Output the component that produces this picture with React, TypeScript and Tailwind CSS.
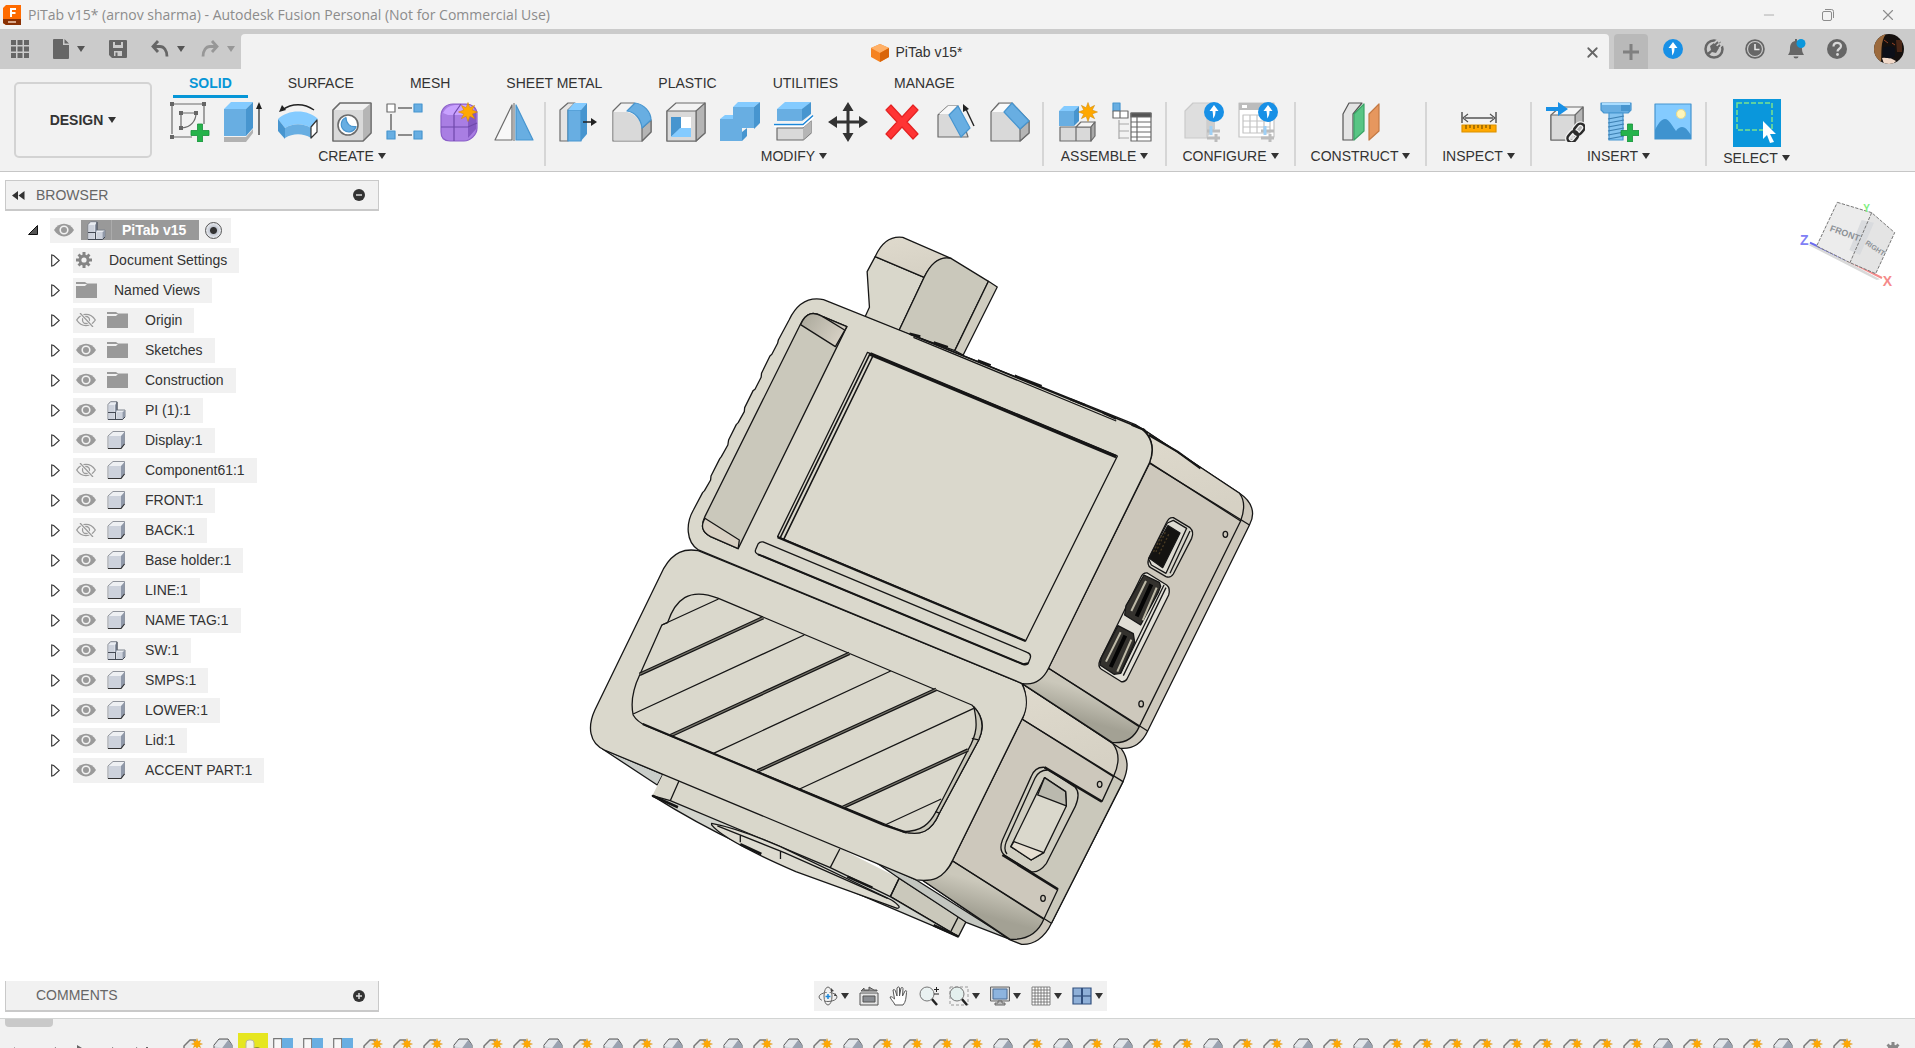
import type { ReactNode } from 'react';
import { Minus, X } from 'lucide-react';
import clsx from 'clsx';

type TreeIconName = 'gear' | 'folder' | 'body' | 'assembly';

interface TreeItem {
  label: string;
  icon: TreeIconName;
  visible?: boolean;
}

interface ToolGroup {
  label: string;
  width: string;
  tools: { name: string; icon: ReactNode }[];
}

/* ---------- small shared icons ---------- */

function Caret({ className = 'text-[#333]' }: { className?: string }) {
  return (
    <svg viewBox="0 0 8 6" className={clsx('w-2 h-[6px] shrink-0', className)} fill="currentColor">
      <path d="M0 0h8L4 6z" />
    </svg>
  );
}

function UpBadge({ className }: { className?: string }) {
  return (
    <svg viewBox="0 0 20 20" className={className}>
      <circle cx="10" cy="10" r="10" fill="#1890e6" />
      <path d="M10 3l4.500 6h-3c0 3-.3 5-2.500 7.500C9.300 14 9 12 8.500 9h-3z" fill="#fff" />
    </svg>
  );
}

function Star({ x, y, s = 1 }: { x: number; y: number; s?: number }) {
  return (
    <path
      transform={`translate(${x} ${y}) scale(${s})`}
      d="M0-10L2-4.500L7-7L4.500-2L10 0L4.500 2L7 7L2 4.500L0 10L-2 4.500L-7 7L-4.500 2L-10 0L-4.500-2L-7-7L-2-4.500z"
      fill="#ffa800"
      stroke="#c98300"
      strokeWidth="0.5"
    />
  );
}

function Tool({ children }: { children: ReactNode }) {
  return (
    <svg viewBox="0 0 40 40" className="size-10" fill="none" stroke="#6b6b6b" strokeWidth="1.2" strokeLinejoin="round">
      {children}
    </svg>
  );
}

const Plus = ({ x, y }: { x: number; y: number }) => (
  <path
    transform={`translate(${x} ${y})`}
    d="M-2.500-9h5v6.500H9v5H2.500V9h-5V2.500H-9v-5h6.500z"
    fill="#25b34b"
    stroke="#17903a"
    strokeWidth="0.8"
  />
);

const Sliders = () => (
  <g stroke="#bcbcbc" strokeWidth="3">
    <path d="M23 29h13M23 36h13" />
    <path d="M27 24v9" stroke="#9fd0f5" />
    <path d="M32 32v8" />
  </g>
);

const UpDot = () => (
  <g stroke="none">
    <circle cx="30" cy="10" r="10" fill="#1890e6" />
    <path d="M30 3l4.500 6h-3c0 3-.3 5-2.500 7.500c.3-2.500 0-4.500-.5-7.500h-3z" fill="#fff" />
  </g>
);

/* ---------- ribbon ---------- */

const groups: ToolGroup[] = [
  {
    label: 'CREATE',
    width: 'w-[394px] pl-2',
    tools: [
      {
        name: 'Create Sketch',
        icon: (
          <Tool>
            <path d="M4 2h28M2 4v28M34 4v18M4 35h18" />
            <path d="M11 11h15M11 11v15M26 11c0 8-5 14-14 15" />
            <path d="M0 0h4v4H0zM32 0h4v4h-4zM0 33h4v4H0zM9 9h4v4H9zM24 9h4v4h-4zM9 24h4v4H9z" fill="#666" stroke="none" />
            <Plus x={30} y={31} />
          </Tool>
        ),
      },
      {
        name: 'Extrude',
        icon: (
          <Tool>
            <path d="M0 35h22l7-8v4l-7 9H0z" fill="#b2b2b2" stroke="none" />
            <path d="M0 7h22v27H0z" fill="#68aee2" stroke="none" />
            <path d="M0 7l7-7h22l-7 7z" fill="#84cbff" stroke="none" />
            <path d="M22 7l7-7v26l-7 8z" fill="#4795cf" stroke="none" />
            <path d="M35 33V5" stroke="#222" />
            <path d="M32 7l3-7 3 7z" fill="#222" stroke="none" />
          </Tool>
        ),
      },
      {
        name: 'Revolve',
        icon: (
          <Tool>
            <path d="M0 17C10 7 30 7 40 17l-7 9c-8-5-18-5-26 0z" fill="#84cbff" stroke="none" />
            <path d="M7 26c8-5 18-5 26 0v10c-8-5-18-5-26 0z" fill="#68aee2" stroke="none" />
            <path d="M0 17l7 9v11l-7-8z" fill="#4795cf" stroke="none" />
            <path d="M39 18v12l-6 6V25z" fill="#fff" stroke="#333" />
            <path d="M4 8C14 1 26 1 36 8" stroke="#222" strokeWidth="1.400" />
            <path d="M1 10l3-7 4 5z" fill="#222" stroke="none" />
          </Tool>
        ),
      },
      {
        name: 'Hole',
        icon: (
          <Tool>
            <path d="M1 8l7-7h31v30l-8 8H1z" fill="#f1f1f1" />
            <path d="M31 8l8-7v30l-8 8z" fill="#b5b5b5" stroke="none" />
            <path d="M1.500 8H31v30.500H1.500z" fill="#d9d9d9" stroke="none" />
            <path d="M1 8l7-7h31v30l-8 8H1z" />
            <circle cx="16" cy="23" r="10" fill="#fff" strokeWidth="1.600" />
            <path d="M14 15.500a7.500 7.500 0 1 0 10 9c-6 1-10-3-10-9z" fill="#68aee2" stroke="#4795cf" />
          </Tool>
        ),
      },
      {
        name: 'Rectangular Pattern',
        icon: (
          <Tool>
            <path d="M12 6h14M5 12v16M12 33h14" strokeWidth="1.500" />
            <path d="M1 2h8v8H1z" fill="#fff" />
            <path d="M28 2h8v8h-8zM1 29h8v8H1zM28 29h8v8h-8z" fill="#68aee2" stroke="#4795cf" />
          </Tool>
        ),
      },
      {
        name: 'Create Form',
        icon: (
          <Tool>
            <path d="M1 14C1 7 6 2 13 2h13c6 0 11 4 11 10v14c0 7-7 13-13 13H10c-6 0-9-3-9-9z" fill="#a97ee3" stroke="#8a5fc8" />
            <path d="M3 11c3-6 8-8 14-8h9c5 0 8 2 8 4l-8 6H8z" fill="#c8a1ff" stroke="none" />
            <path d="M28 14l8-4v17l-8 9z" fill="#8459c2" stroke="none" />
            <path d="M14 12v27M1 25h27l9-4M14 12l7-10" stroke="#6f48ab" />
            <Star x={28} y={10} s={0.95} />
          </Tool>
        ),
      },
      {
        name: 'Mirror',
        icon: (
          <Tool>
            <path d="M18 3v35H1z" fill="#f8f8f8" />
            <path d="M20 1v38" strokeWidth="1" />
            <path d="M22 3v35h17z" fill="#68aee2" stroke="#4795cf" />
          </Tool>
        ),
      },
    ],
  },
  {
    label: 'MODIFY',
    width: 'w-[498px]',
    tools: [
      {
        name: 'Press Pull',
        icon: (
          <Tool>
            <path d="M10 1h7l-7 7v31H2V8z" fill="#e4e4e4" />
            <path d="M10 8h13v31H10z" fill="#68aee2" stroke="#4795cf" />
            <path d="M10 8l6-7h13l-6 7z" fill="#84cbff" stroke="none" />
            <path d="M23 8l6-7v31l-6 7z" fill="#4795cf" stroke="none" />
            <path d="M25 20h10" stroke="#222" strokeWidth="1.500" />
            <path d="M33 16l6 4-6 4z" fill="#222" stroke="none" />
          </Tool>
        ),
      },
      {
        name: 'Fillet',
        icon: (
          <Tool>
            <path d="M1 9l8-8h13l17 18v11l-9 9H1z" fill="#f3f3f3" />
            <path d="M1.500 10H15c9 2 15 10 15 18v10.500H1.500z" fill="#d9d9d9" stroke="none" />
            <path d="M30 26l9-8v12l-9 9z" fill="#b5b5b5" />
            <path d="M15 9l8-8c9 1 16 9 16 17l-9 8c-1-9-7-16-15-17z" fill="#68aee2" stroke="#4795cf" />
          </Tool>
        ),
      },
      {
        name: 'Shell',
        icon: (
          <Tool>
            <path d="M1 9l9-8h29v30l-9 8H1z" fill="#f3f3f3" />
            <path d="M30 9l9-8v30l-9 8z" fill="#b5b5b5" />
            <path d="M1 9h29v30H1z" fill="#d9d9d9" />
            <path d="M5 15h20v20H5z" fill="#fff" stroke="none" />
            <path d="M5 15h10v11L5 35z" fill="#4795cf" stroke="none" />
            <path d="M5 35l9-9h11v9z" fill="#84cbff" stroke="none" />
          </Tool>
        ),
      },
      {
        name: 'Combine',
        icon: (
          <Tool>
            <path d="M0 17h13V5h21v21H22v13H0z" fill="#68aee2" stroke="none" />
            <path d="M0 17l5-4h8v4zM13 5l5-5h22l-6 5z" fill="#84cbff" stroke="none" />
            <path d="M34 5l6-5v21l-6 6zM22 39v-9l5-4v8z" fill="#4795cf" stroke="none" />
          </Tool>
        ),
      },
      {
        name: 'Split Body',
        icon: (
          <Tool>
            <path d="M3 7h25v12H3z" fill="#68aee2" stroke="none" />
            <path d="M3 7l8-7h26l-8 7z" fill="#84cbff" stroke="none" />
            <path d="M28 7l9-7v12l-9 7z" fill="#4795cf" stroke="none" />
            <path d="M3 26h26l8-7v12l-8 7H3z" fill="#d9d9d9" />
            <path d="M29 26l8-7v12l-8 7z" fill="#b5b5b5" stroke="none" />
            <path d="M0 23h29l10-9" stroke="#fff" strokeWidth="4" />
            <path d="M0 22.500h29l10-9" stroke="#1b86d8" strokeWidth="1.500" />
          </Tool>
        ),
      },
      {
        name: 'Move/Copy',
        icon: (
          <svg viewBox="0 0 40 40" className="size-10" fill="#333">
            <path d="M20 0l5.500 9h-4v9.500H31V14l9 6-9 6v-4.500h-9.500V31h4L20 40l-5.500-9h4v-9.500H9V26l-9-6 9-6v4.500h9.500V9h-4z" />
          </svg>
        ),
      },
      {
        name: 'Delete',
        icon: (
          <Tool>
            <path d="M4 8l5-5 11 12L31 3l5 5-11 12 11 12-5 5-11-12L9 37l-5-5 11-12z" fill="#ff3434" stroke="#e32222" />
          </Tool>
        ),
      },
      {
        name: 'Draft',
        icon: (
          <Tool>
            <path d="M2 13l10-9h10l10 31H2z" fill="#d9d9d9" />
            <path d="M3 12l9-8h9l-8 8z" fill="#f8f8f8" stroke="none" />
            <path d="M13 13l9-9 12 22-9 9z" fill="#68aee2" stroke="#4795cf" />
            <path d="M38 24L29 5" stroke="#222" strokeWidth="1.400" />
            <path d="M27 10l0-8 6 5z" fill="#222" stroke="none" />
          </Tool>
        ),
      },
      {
        name: 'Chamfer',
        icon: (
          <Tool>
            <path d="M1 10l8-9h13l17 18v12l-9 8H1z" fill="#d9d9d9" />
            <path d="M2 10l8-8h12l-8 8z" fill="#fafafa" stroke="none" />
            <path d="M30 27l9-8v12l-9 8z" fill="#b5b5b5" />
            <path d="M14 10l8-9 17 18-9 8z" fill="#68aee2" stroke="#4795cf" />
          </Tool>
        ),
      },
    ],
  },
  {
    label: 'ASSEMBLE',
    width: 'w-[123px]',
    tools: [
      {
        name: 'New Component',
        icon: (
          <Tool>
            <path d="M2 25h16v14H2zM18 25h15v14H18z" fill="#d9d9d9" />
            <path d="M18 25l5-5h14l-4 5z" fill="#f5f5f5" />
            <path d="M33 25l4-5v14l-4 5z" fill="#a9a9a9" />
            <path d="M1 9h15v15H1z" fill="#68aee2" stroke="none" />
            <path d="M1 9l5-5h15l-5 5z" fill="#84cbff" stroke="none" />
            <path d="M16 9l5-5v15l-5 5z" fill="#4795cf" stroke="none" />
            <Star x={30} y={10} s={0.95} />
          </Tool>
        ),
      },
      {
        name: 'Component Table',
        icon: (
          <Tool>
            <path d="M1 1h7v8H1z" fill="#68aee2" stroke="#4795cf" />
            <path d="M1 9h7v7H1zM8 9h8v7H8z" fill="#fff" />
            <path d="M7 18v19M7 22h10M7 29h10M7 36h10" stroke="#a8a8a8" />
            <path d="M19 11h20v28H19z" fill="#fff" />
            <path d="M19 11h20v4H19z" fill="#555" />
            <path d="M25 15v24M19 20h20M19 25h20M19 30h20M19 35h20" />
          </Tool>
        ),
      },
    ],
  },
  {
    label: 'CONFIGURE',
    width: 'w-[129px]',
    tools: [
      {
        name: 'Configure Design',
        icon: (
          <Tool>
            <path d="M1 9l8-8h20l-6 8v27H1z" fill="#dedede" stroke="#cacaca" />
            <path d="M23 9l8-8v26l-8 8z" fill="#cdcdcd" stroke="none" />
            <UpDot />
            <Sliders />
          </Tool>
        ),
      },
      {
        name: 'Configuration Table',
        icon: (
          <Tool>
            <path d="M1 1h35v34H1z" fill="#fff" stroke="#c4c4c4" />
            <path d="M1 1h35v7H1z" fill="#bcbcbc" stroke="none" />
            <path d="M4 3h5v3H4z" fill="#fff" stroke="none" />
            <path d="M5 13h27v18H5zM5 19h27M5 25h27M12 13v18M19 13v18M26 13v18" stroke="#c4c4c4" />
            <UpDot />
            <Sliders />
          </Tool>
        ),
      },
    ],
  },
  {
    label: 'CONSTRUCT',
    width: 'w-[131px]',
    tools: [
      {
        name: 'Offset Plane',
        icon: (
          <Tool>
            <path d="M2 12L8 1h13l-9 11v26H2z" fill="#e4e4e4" stroke="#555" />
            <path d="M13 12L23 2v27L13 38z" fill="#58c584" stroke="#3aa566" />
            <path d="M28 12L38 2v27L28 38z" fill="#e6975e" stroke="#c47a45" />
          </Tool>
        ),
      },
    ],
  },
  {
    label: 'INSPECT',
    width: 'w-[105px]',
    tools: [
      {
        name: 'Measure',
        icon: (
          <Tool>
            <path d="M3 10v11M37 10v11M6 16h28" stroke="#555" strokeWidth="1.500" />
            <path d="M9 12l-5 4 5 4M31 12l5 4-5 4" stroke="#555" />
            <path d="M3 23h34v7H3z" fill="#ffa800" stroke="#dc9200" />
            <path d="M7 23v4M11 23v3M15 23v4M19 23v3M23 23v4M27 23v3M31 23v4" stroke="#7a5200" />
          </Tool>
        ),
      },
    ],
  },
  {
    label: 'INSERT',
    width: 'w-[175px]',
    tools: [
      {
        name: 'Insert Derive',
        icon: (
          <Tool>
            <path d="M6 13l9-8h23v26l-8 7H6z" fill="#f5f5f5" />
            <path d="M30 13l8-8v26l-8 7z" fill="#b5b5b5" />
            <path d="M6 13h24v25H6z" fill="#d9d9d9" />
            <path d="M1 5h12V0l10 7-10 7V9H1z" fill="#1890e6" stroke="none" />
            <g transform="rotate(-50 31 31)" stroke="#f1f1f1" strokeWidth="5">
              <rect x="20" y="27" width="12" height="8" rx="4" />
              <rect x="30" y="27" width="12" height="8" rx="4" />
            </g>
            <g transform="rotate(-50 31 31)" stroke="#2b2b2b" strokeWidth="2.500">
              <rect x="20" y="27" width="12" height="8" rx="4" />
              <rect x="30" y="27" width="12" height="8" rx="4" />
            </g>
          </Tool>
        ),
      },
      {
        name: 'Insert Fastener',
        icon: (
          <Tool>
            <path d="M2 1h30v7l-3 3H5L2 8z" fill="#68aee2" stroke="#4795cf" />
            <path d="M3 1h28v2H3z" fill="#a8dcff" stroke="none" />
            <path d="M22 3h9v6h-9z" fill="#4795cf" stroke="none" />
            <path d="M10 11h14v27H10z" fill="#84c3f0" stroke="#4795cf" />
            <path d="M9 17l16-3M9 21l16-3M9 25l16-3M9 29l16-3M9 33l16-3M9 37l16-3" stroke="#3c7fb2" />
            <Plus x={31} y={31} />
          </Tool>
        ),
      },
      {
        name: 'Canvas',
        icon: (
          <Tool>
            <path d="M2 2h36v35H2z" fill="#84cbff" stroke="#4795cf" />
            <path d="M2 28c3-6 6-11 10-11s8 8 11 12c2-3 4-4 6-4 4 0 6 4 9 8v4H2z" fill="#3f93cf" stroke="none" />
            <circle cx="28" cy="12" r="4.500" fill="#fff6ba" stroke="#e6d98d" />
          </Tool>
        ),
      },
    ],
  },
  {
    label: 'SELECT',
    width: 'w-[99px]',
    tools: [
      {
        name: 'Select',
        icon: (
          <svg viewBox="0 0 48 48" className="size-12 bg-[#0a97dc]" fill="none">
            <path d="M4 4h35v27H4z" stroke="#7be38d" strokeWidth="1.500" strokeDasharray="5 2" />
            <path d="M30 22l13 13h-6l4 8-4 1-3-8-4 4z" fill="#fff" />
          </svg>
        ),
      },
    ],
  },
];

const workspaceTabs = [
  { label: 'SOLID', active: true },
  { label: 'SURFACE' },
  { label: 'MESH' },
  { label: 'SHEET METAL' },
  { label: 'PLASTIC' },
  { label: 'UTILITIES' },
  { label: 'MANAGE' },
];

function TitleBar() {
  return (
    <header className="flex h-[29px] shrink-0 items-center bg-[#f3f3f3] pl-[3px] text-[#8c8c8c]">
      <svg viewBox="0 0 18 20" className="h-5 w-[18px]">
        <path d="M3 0h15v20H3L0 18V3z" fill="#ff6b00" />
        <path d="M0 14h18v6H3l-3-2z" fill="#8a3205" />
        <path d="M7 3h6v2H9v2h3.500v2H9v3H7z" fill="#fff" />
        <path d="M5 16h8v2H5z" fill="#d9a88a" />
      </svg>
      <h1 className="ml-[7px] font-['Open_Sans','Noto_Sans',sans-serif] text-[14px] whitespace-nowrap">
        PiTab v15* (arnov sharma) - Autodesk Fusion Personal (Not for Commercial Use)
      </h1>
      <div className="ml-auto flex items-center gap-[44px] pr-[18px]">
        <button aria-label="Minimize">
          <Minus className="size-4" strokeWidth={1} />
        </button>
        <button aria-label="Restore">
          <svg viewBox="0 0 14 14" className="size-[14px]" fill="none" stroke="currentColor">
            <rect x="1.500" y="3.500" width="9" height="9" rx="1.500" />
            <path d="M4 1.500h6.500a2 2 0 0 1 2 2V10" />
          </svg>
        </button>
        <button aria-label="Close">
          <X className="size-[18px]" strokeWidth={1.5} />
        </button>
      </div>
    </header>
  );
}

function DocumentBar() {
  return (
    <div className="flex h-10 shrink-0 bg-[#cbcbcb] pt-[5px] text-[#666]">
      <div className="flex w-[241px] shrink-0 items-center pb-[5px] pl-[11px]">
        <button aria-label="Data panel" className="mr-6">
          <svg viewBox="0 0 18 18" className="size-[18px]" fill="currentColor">
            <path d="M0 0h5v5H0zM6.500 0h5v5h-5zM13 0h5v5h-5zM0 6.500h5v5H0zM6.500 6.500h5v5h-5zM13 6.500h5v5h-5zM0 13h5v5H0zM6.500 13h5v5h-5zM13 13h5v5h-5z" />
          </svg>
        </button>
        <button aria-label="File" className="mr-6 flex items-center gap-2">
          <svg viewBox="0 0 16 20" className="h-5 w-4" fill="currentColor">
            <path d="M1 0h9v6h6v13a1 1 0 0 1-1 1H1a1 1 0 0 1-1-1V1a1 1 0 0 1 1-1zM11.500 0L16 4.500h-4.500z" />
          </svg>
          <Caret className="text-[#555]" />
        </button>
        <button aria-label="Save" className="mr-6">
          <svg viewBox="0 0 18 18" className="size-[18px]" fill="currentColor" fillRule="evenodd">
            <path d="M1 0h16a1 1 0 0 1 1 1v16a1 1 0 0 1-1 1H3l-3-3V1a1 1 0 0 1 1-1zM4 2v6h10V2h-2v3H6V2zM5 11v5h8v-5zM6.500 12.500h2V16h-2z" />
          </svg>
        </button>
        <button aria-label="Undo" className="mr-4 flex items-center gap-2">
          <svg viewBox="0 0 18 18" className="size-[18px]" fill="none" stroke="currentColor" strokeWidth="2.800">
            <path d="M7 1L2 6.500L7 12M2 6.500h7c4 0 7 4 7 10" />
          </svg>
          <Caret className="text-[#555]" />
        </button>
        <button aria-label="Redo" className="flex items-center gap-2 text-[#979797]">
          <svg viewBox="0 0 18 18" className="size-[18px]" fill="none" stroke="currentColor" strokeWidth="2.800">
            <path d="M11 1l5 5.500L11 12M16 6.500H9c-4 0-7 4-7 10" />
          </svg>
          <Caret className="text-[#979797]" />
        </button>
      </div>

      <div className="flex flex-1 items-center rounded-t-[4px] bg-[#f2f2f2] pt-[2px] pr-2">
        <div className="flex flex-1 items-center justify-center gap-[7px] pl-2 text-[14px] text-[#333]">
          <svg viewBox="0 0 18 18" className="size-[18px]">
            <path d="M9 0l9 4v9l-9 5-9-5V4z" fill="#f58220" />
            <path d="M9 0l9 4-9 5-9-5z" fill="#ffb066" />
            <path d="M9 9l9-5v9l-9 5z" fill="#d9650a" />
          </svg>
          <span>PiTab v15*</span>
        </div>
        <button aria-label="Close document">
          <X className="size-[17px]" strokeWidth={2.5} />
        </button>
      </div>

      <button aria-label="New design" className="ml-[5px] flex w-[34px] items-center justify-center rounded-t-[4px] bg-[#b9b9b9]">
        <svg viewBox="0 0 16 16" className="size-4" fill="#808080">
          <path d="M6.500 0h3v6.500H16v3H9.500V16h-3V9.500H0v-3h6.500z" />
        </svg>
      </button>

      <div className="flex items-center gap-[21px] pr-[11px] pb-[5px] pl-[15px]">
        <button aria-label="Upgrade">
          <UpBadge className="size-5" />
        </button>
        <button aria-label="Extensions">
          <svg viewBox="0 0 20 20" className="size-5" fill="none">
            <circle cx="10" cy="10" r="8.500" stroke="currentColor" strokeWidth="2.500" />
            <path d="M3 14l4-3-1-4 4-3 5 5-3 5-4-1-3 3z" fill="currentColor" />
            <path d="M11 5l4-4M14 8l5-4" stroke="#cbcbcb" strokeWidth="4" />
            <path d="M11 6l3-3M13 9l3-3" stroke="currentColor" strokeWidth="1.800" />
          </svg>
        </button>
        <button aria-label="Job status">
          <svg viewBox="0 0 20 20" className="size-5">
            <circle cx="10" cy="10" r="9.800" fill="currentColor" />
            <circle cx="10" cy="10" r="7.500" fill="none" stroke="#cbcbcb" strokeWidth="1.200" />
            <path d="M10 5v5.500h4.500" fill="none" stroke="#e6e6e6" strokeWidth="1.600" />
          </svg>
        </button>
        <button aria-label="Notifications">
          <svg viewBox="0 0 20 20" className="size-5">
            <path d="M9 0h2v2c4 1 5 4 5 8 0 3 1 4 2 6H2c1-2 2-3 2-6 0-4 1-7 5-8zM7.500 17.500h5a2.500 2 0 0 1-5 0z" fill="currentColor" />
            <circle cx="15" cy="4.500" r="4.500" fill="#0a97dc" />
          </svg>
        </button>
        <button aria-label="Help">
          <svg viewBox="0 0 20 20" className="size-5">
            <circle cx="10" cy="10" r="10" fill="currentColor" />
            <path d="M6.500 7.500c0-5 7.500-4.500 7.500-.5 0 3-3.500 2.500-3.500 5.500" fill="none" stroke="#d8d8d8" strokeWidth="2.200" />
            <circle cx="10.500" cy="15.500" r="1.400" fill="#d8d8d8" />
          </svg>
        </button>
        <button aria-label="Account" className="ml-[6px]">
          <svg viewBox="0 0 30 30" className="size-[30px] rounded-full">
            <path d="M0 0h30v30H0z" fill="#15100e" />
            <path d="M0 0h12C6 8 8 18 7 30H0z" fill="#9c6a3d" />
            <path d="M22 6h6v12h-5z" fill="#4a2717" />
            <path d="M8 24c5-1 10 0 14 3l-3 3h-9z" fill="#f1d9c9" />
            <path d="M9 14c3-2 9-2 12 0v8c-3 3-9 3-12 0z" fill="#0c0f18" />
            <path d="M10 6l4 3M18 9l3 2" stroke="#9a4325" />
          </svg>
        </button>
      </div>
    </div>
  );
}

function Ribbon() {
  return (
    <div className="flex h-[103px] shrink-0 border-b border-[#c6c6c6] bg-[#f2f2f2] text-[#333]">
      <button className="mt-[13px] ml-[14px] flex h-[76px] w-[138px] shrink-0 items-center justify-center gap-[5px] rounded-[5px] border-2 border-[#d3d3d3] text-[14px] font-bold">
        DESIGN
        <Caret />
      </button>
      <div className="min-w-0 flex-1">
        <nav className="flex h-[29px] gap-6 pl-[21px]">
          {workspaceTabs.map((tab) => (
            <button
              key={tab.label}
              className={clsx(
                'border-b-3 px-4 pt-[2px] text-[14px] whitespace-nowrap',
                tab.active ? 'border-[#0696d7] font-bold text-[#0696d7]' : 'border-transparent',
              )}
            >
              {tab.label}
            </button>
          ))}
        </nav>
        <div className="flex">
          {groups.map((group) => (
            <section
              key={group.label}
              className={clsx(
                'my-1 flex h-[64px] shrink-0 flex-col items-center border-r-2 border-[#d6d6d6] last:border-r-0',
                group.width,
              )}
            >
              <div className="-mt-[3px] flex h-12 items-center">
                {group.tools.map((tool) => (
                  <button key={tool.name} title={tool.name} className="flex w-[54px] justify-center">
                    {tool.icon}
                  </button>
                ))}
              </div>
              <button className="mt-px flex items-center gap-1 text-[14px] leading-[20px] whitespace-nowrap">
                {group.label}
                <Caret />
              </button>
            </section>
          ))}
        </div>
      </div>
    </div>
  );
}

/* ---------- browser tree ---------- */

const treeItems: TreeItem[] = [
  { label: 'Document Settings', icon: 'gear' },
  { label: 'Named Views', icon: 'folder' },
  { label: 'Origin', icon: 'folder', visible: false },
  { label: 'Sketches', icon: 'folder', visible: true },
  { label: 'Construction', icon: 'folder', visible: true },
  { label: 'PI (1):1', icon: 'assembly', visible: true },
  { label: 'Display:1', icon: 'body', visible: true },
  { label: 'Component61:1', icon: 'body', visible: false },
  { label: 'FRONT:1', icon: 'body', visible: true },
  { label: 'BACK:1', icon: 'body', visible: false },
  { label: 'Base holder:1', icon: 'body', visible: true },
  { label: 'LINE:1', icon: 'body', visible: true },
  { label: 'NAME TAG:1', icon: 'body', visible: true },
  { label: 'SW:1', icon: 'assembly', visible: true },
  { label: 'SMPS:1', icon: 'body', visible: true },
  { label: 'LOWER:1', icon: 'body', visible: true },
  { label: 'Lid:1', icon: 'body', visible: true },
  { label: 'ACCENT PART:1', icon: 'body', visible: true },
];

function Eye({ visible }: { visible: boolean }) {
  return (
    <svg viewBox="0 0 20 14" className="h-[14px] w-5" fill="none">
      {visible ? (
        <>
          <path d="M0 7C5-1.500 15-1.500 20 7C15 15.500 5 15.500 0 7z" fill="#9a9a9a" />
          <circle cx="10" cy="7" r="3.800" stroke="#f2f2f2" strokeWidth="1.600" />
        </>
      ) : (
        <g stroke="#9a9a9a" strokeWidth="1.300">
          <path d="M.7 7C5.500-.5 14.500-.5 19.300 7C14.500 14.500 5.500 14.500 .7 7z" />
          <circle cx="10" cy="7" r="3.500" />
          <path d="M4 0l13 14" stroke="#f2f2f2" strokeWidth="3" />
          <path d="M4 0l13 14" />
        </g>
      )}
    </svg>
  );
}

function TreeIcon({ icon }: { icon: TreeIconName }) {
  if (icon === 'gear') {
    return (
      <svg viewBox="0 0 16 16" className="size-4">
        <path d="M6.500 0h3v16h-3zM0 6.500h16v3H0zM1.500 3.500l2-2 11 11-2 2zM12.500 1.500l2 2-11 11-2-2z" fill="#858585" />
        <circle cx="8" cy="8" r="5.500" fill="#858585" />
        <circle cx="8" cy="8" r="2.600" fill="#f2f2f2" />
      </svg>
    );
  }
  if (icon === 'folder') {
    return (
      <svg viewBox="0 0 21 16" className="h-4 w-[21px]" fill="#999">
        <path d="M0 0h9l2 1.500H21V16H0V4h9l2-2H0z" />
      </svg>
    );
  }
  if (icon === 'assembly') {
    return (
      <svg viewBox="0 0 19 19" className="size-[19px]" strokeLinejoin="round">
        <path d="M1 3.500L3.500 .7H10V9h8v7l-2.500 2.500H1z" fill="#e9ecf1" stroke="#7d828c" />
        <path d="M1.500 4H7.500v14h-6zM9.500 11h6v7h-6z" fill="#cdd2dc" />
        <path d="M8 4l2-3v9l-2 2zM15.500 11L18 9.500V16l-2.500 2z" fill="#8f98a8" />
        <path d="M1 11.500h7M8.500 11v7.500M1 18.500h14.500L18 16M10 1v8" fill="none" stroke="#444a54" />
      </svg>
    );
  }
  return (
    <svg viewBox="0 0 18 18" className="size-[18px]" strokeLinejoin="round">
      <path d="M1 5l5-4.500h11.500V13L14 17.500H1z" fill="#eef0f3" stroke="#8f939b" />
      <path d="M14 5l3.500-4v12L14 17z" fill="#8f98a8" />
      <path d="M2 5h12v12H2z" fill="#cdd2dc" />
      <path d="M1 17.500h13l3.500-4.500" fill="none" stroke="#333" strokeWidth="1.200" />
    </svg>
  );
}

function BrowserPanel() {
  return (
    <aside className="w-[379px] pl-[5px]">
      <div className="mt-2 flex h-[31px] items-center border border-b-2 border-[#c9c9c9] bg-[#f1f1f1] pr-[13px] pl-[6px] text-[14px] text-[#666]">
        <button aria-label="Collapse browser">
          <svg viewBox="0 0 13 9" className="h-[9px] w-[13px]" fill="#333">
            <path d="M6 0v9L0 4.500zM12.500 0v9L6.500 4.500z" />
          </svg>
        </button>
        <h2 className="ml-[11px]">BROWSER</h2>
        <button aria-label="Minimize browser" className="ml-auto">
          <svg viewBox="0 0 12 12" className="size-3">
            <circle cx="6" cy="6" r="6" fill="#333" />
            <path d="M3 6h6" stroke="#ddd" strokeWidth="1.500" />
          </svg>
        </button>
      </div>

      <div className="mt-1 flex h-[30px] items-center pl-[23px]">
        <svg viewBox="0 0 10 10" className="size-[10px]">
          <path d="M9.500 .5v9h-9z" fill="#555" stroke="#111" />
        </svg>
        <div className="ml-3 flex h-[25px] items-center bg-[#f1f1f1] pr-[9px] pl-1">
          <Eye visible />
          <div className="ml-[7px] flex h-5 items-center bg-[#999] text-[14px] font-bold text-white">
            <span className="flex h-full w-[31px] items-center justify-center border-r border-[#ababab]">
              <TreeIcon icon="assembly" />
            </span>
            <span className="pr-[13px] pl-[10px]">PiTab v15</span>
          </div>
          <input
            type="radio"
            aria-label="Activate PiTab v15"
            defaultChecked
            className="ml-[6px] size-[17px] appearance-none rounded-full border border-[#555] bg-[radial-gradient(circle,#333_0,#333_3px,#c3c8d2_4px,#eef0f4_8px)]"
          />
        </div>
      </div>

      <ul>
        {treeItems.map((item) => (
          <li key={item.label} className="flex h-[30px] items-center pl-[46px]">
            <button aria-label={`Expand ${item.label}`}>
              <svg viewBox="0 0 9 13" className="h-[13px] w-[9px]">
                <path d="M.7 1v11l2-.5L8.300 6.500L2.700 1.500z" fill="#fff" stroke="#333" strokeWidth="1.100" />
              </svg>
            </button>
            <div className="ml-[13px] flex h-[25px] items-center bg-[#f1f1f1] pr-3 pl-[3px] text-[14px] whitespace-nowrap text-[#333]">
              {item.visible !== undefined && (
                <span className="mr-[11px]">
                  <Eye visible={item.visible} />
                </span>
              )}
              <span className={item.icon === 'gear' ? 'w-[33px]' : 'w-[38px]'}>
                <TreeIcon icon={item.icon} />
              </span>
              <span>{item.label}</span>
            </div>
          </li>
        ))}
      </ul>
    </aside>
  );
}

/* ---------- 3D viewport ---------- */

function Model() {
  return (
    <svg
      viewBox="0 172 1915 846"
      className="absolute inset-0 h-full w-full [&_*]:[vector-effect:non-scaling-stroke]"
      stroke="#161616"
      strokeWidth="1.300"
      strokeLinejoin="round"
      fill="none"
    >
      <defs>
        <linearGradient id="roundTop" x1="0" y1="0" x2="0.300" y2="1">
          <stop offset="0" stopColor="#dfdacd" />
          <stop offset="1" stopColor="#d6d1c4" />
        </linearGradient>
        <linearGradient id="roundBottom" x1="0.550" y1="0.300" x2="0.400" y2="0.650">
          <stop offset="0" stopColor="#cbc8bb" />
          <stop offset="1" stopColor="#a3a194" />
        </linearGradient>
        <linearGradient id="recess" x1="0" y1="0" x2="1" y2="0.500">
          <stop offset="0" stopColor="#a9a79a" />
          <stop offset="1" stopColor="#d6d0c4" />
        </linearGradient>
      </defs>

      {/* base holder and lower housing */}
      <g transform="translate(570 530) scale(0.3827 0.3333)">
        <path d="M85 657L228 765L243 733z" fill="#c9cdc9" />
        <path d="M215 797L243 733L705 955L860 1045L1035 1175L1015 1220L837 1100L680 1013L262 812z" fill="#d9d7cb" stroke="none" />
        <path d="M860 1045L1035 1175L1015 1220L837 1100z" fill="#cac8bb" />
        <path d="M215 797Q330 880 450 945L590 1012L1015 1220L837 1100L680 1013L262 812z" fill="#d2d4cd" />
        <path d="M370 880Q440 895 550 950L840 1110Q870 1133 855 1135L590 1025Q400 930 370 885z" fill="#dddbd0" />
        <path d="M385 888L560 968L830 1105M445 915v22M550 965v22M285 752L262 812M705 957L680 1013M860 1045L837 1100M1015 1160L995 1205" />
        <path d="M215 797L282 832M445 943L500 972M725 1040L790 1073M950 1186L1015 1220" strokeWidth="2.600" />
        <path d="M790 990L905 1050L1150 1228L1035 1177L860 1045z" fill="#c3c6c0" />

        <path d="M1190 470L1418 640L1440 655C1462 690 1458 720 1445 755L1258 1180C1240 1225 1210 1245 1180 1243L1150 1230L920 1050L1000 990L1180 570z" fill="#cdc8bc" />
        <path d="M1330 775L1390 815L1420 740L1445 755L1258 1180L1238 1168L1275 1078L1130 975z" fill="#cac8bb" stroke="none" />
        <path d="M1182 462L1418 640Q1445 680 1420 740L1182 568Q1200 510 1182 462z" fill="url(#roundTop)" />
        <path d="M1000 993L1238 1168Q1215 1232 1150 1228L920 1050Q975 1050 1000 993z" fill="url(#roundBottom)" />
        <path d="M1182 568L1445 755L1258 1180M1420 740L1390 815M1000 993L1258 1180M1275 1078L1238 1168" />
        <path d="M1240 712Q1215 710 1205 740L1130 930Q1120 960 1135 975L1205 1025Q1225 1030 1245 1000L1320 830Q1335 790 1320 772z" fill="#d0cec1" />
        <path d="M1248 720Q1225 720 1215 745L1140 935Q1132 960 1142 972" />
        <path d="M1240 743L1295 785L1297 828L1238 968L1205 990L1152 950z" fill="#dad8cc" />
        <path d="M1240 743L1295 785L1297 828L1222 795z" fill="#bab9ae" />
        <path d="M1160 935L1238 968L1205 990L1152 950z" fill="#e6dfd2" />
        <path d="M1240 712L1390 815M1130 975L1275 1078" strokeWidth="2.600" />
        <ellipse cx="1384" cy="763" rx="6" ry="9" />
        <ellipse cx="1236" cy="1105" rx="6" ry="9" />

        <path d="M335 62L1180 460C1198 500 1195 540 1180 570L1000 990C975 1050 945 1055 905 1050L90 660C50 640 45 590 65 540L245 115C270 65 300 55 335 62z" fill="#dad8cc" />
        <path d="M388 205L1050 525C1085 560 1080 600 1068 630L965 850C945 905 915 918 870 905L200 588Q175 575 165 555Q155 500 182 435L240 285L255 278C275 210 310 170 388 205z" />
        <path d="M1055 530C1083 565 1080 600 1068 630L965 850C945 905 915 920 870 905C920 905 940 880 955 848L975 805L1040 660C1065 610 1065 580 1055 530z" fill="#c8c6b8" />
        <path d="M1050 625L1067 630M955 845L967 850" />
        <path d="M388 207L240 285M612 315L165 552M838 423L375 670M1055 535L600 777M970 807L823 885" />
        <path d="M505 263L182 433M730 370L263 617M957 478L490 723M1040 660L713 832" strokeWidth="3.600" />
        <path d="M505 263L182 433M730 370L263 617M957 478L490 723M1040 660L713 832" stroke="#77756b" strokeWidth="1.200" />
        <path d="M190 582L820 885L880 908" strokeWidth="2.200" />
      </g>

      {/* handle and upper housing */}
      <g transform="translate(680 220) scale(0.3827 0.3333)">
        <path d="M483 292L495 262L489 155L510 110L638 172L572 332z" fill="#d9d7cb" />
        <path d="M510 110Q535 45 582 52L708 115Q665 108 638 172z" fill="url(#roundTop)" />
        <path d="M638 172Q665 105 708 115L806 184L718 392L572 332z" fill="#cac8bb" />
        <path d="M806 184L829 201L740 405L718 392z" fill="#d0cdc0" />

        <path d="M1210 628L1462 820C1495 845 1505 880 1488 915L1222 1533C1205 1575 1180 1588 1150 1585L1130 1570L893 1390L960 1350L1227 730z" fill="#cdc8bc" />
        <path d="M1210 628L1462 820Q1482 850 1465 903L1227 728Q1245 680 1218 636z" fill="url(#roundTop)" />
        <path d="M963 1345L1200 1520Q1180 1572 1130 1568L893 1390Q940 1390 963 1345z" fill="url(#roundBottom)" />
        <path d="M1227 730L1488 915M1465 903L1200 1520M963 1345L1222 1533" />
        <ellipse cx="1425" cy="943" rx="6" ry="9" />
        <ellipse cx="1205" cy="1452" rx="6" ry="9" />

        <path
          d="M375 239L1190 614C1230 640 1242 680 1227 728L963 1345Q940 1400 893 1390L48 990C15 965 15 910 35 870L59 818L64 812L80 780L81 768L104 716L108 710L125 675L127 660L147 614L152 608L168 575L169 563L191 512L196 508L212 472L213 460L235 408L240 403L255 370L257 360L285 300C310 240 345 232 375 239z"
          fill="#dad8cc"
        />
        <path d="M600 342L1215 630" strokeWidth="1.600" />
        <path d="M600 341L628 349M663 367L700 381M778 421L812 436M875 467L945 498M1020 538L1060 556M1105 578L1140 596M1180 614L1215 631M1225 645L1300 695L1360 745" strokeWidth="2.200" />
        <path d="M610 352L1140 603" />

        <path d="M315 312C330 275 350 275 372 289L436 320L152 986L80 950C55 935 55 915 65 890z" fill="#cac8bb" />
        <path d="M315 314C330 275 350 275 372 289L436 320L406 380z" fill="url(#recess)" />
        <path d="M372 289L430 330" />
        <path d="M65 895L155 960L152 986L80 950C55 935 55 915 65 895z" fill="#d8d0c3" />

        <path d="M490 397L1143 708L903 1263L255 950z" />
        <path d="M497 402L1140 710" strokeWidth="3.600" />
        <path d="M497 400L262 953M504 408L271 958" strokeWidth="1.600" />
        <path d="M255 952L903 1263" strokeWidth="2.200" />
        <path d="M217 966L907 1297Q919 1302 915 1315L910 1330Q905 1337 897 1333L204 1003Q194 998 198 988L204 972Q209 964 217 966z" />
        <path d="M204 1003L897 1333L910 1330" strokeWidth="2" />
      </g>

      {/* ports */}
      <g transform="translate(1090 505) scale(0.3333)">
        <path d="M250 38Q237 36 230 52L176 160Q170 180 182 188L228 215Q242 220 250 207L305 100Q313 80 300 68z" fill="#d4d2c8" />
        <path d="M250 46L290 70L228 205L184 180L176 162L232 54z" fill="#dddbd2" />
        <path d="M234 62L270 84L218 188L178 160z" fill="#141311" />
        <path d="M226 82L198 140M236 88L206 150M214 92L190 142" stroke="#4b3d24" strokeDasharray="2 2" />
        <path d="M300 78L240 205" />

        <path d="M172 204Q160 202 154 214L30 465Q22 484 34 493L92 529Q104 534 112 520L236 270Q242 250 230 240z" fill="#e1dfd6" />
        <path d="M162 210L208 232L212 244L205 262L152 360L104 330L108 302z" fill="#34322e" />
        <path d="M84 362L130 386L134 412L92 505L72 508L30 480L34 458z" fill="#34322e" />
        <path d="M168 228L124 318M200 248L158 346M92 382L48 470M124 404L82 500" stroke="#bdb9a6" strokeWidth="2" />
        <path d="M184 238L140 334M106 392L62 486" stroke="#050505" strokeWidth="4" />
        <path d="M228 248L100 512M222 240L92 505" />
      </g>
    </svg>
  );
}

function ViewCube() {
  return (
    <svg viewBox="0 0 405 360" className="absolute top-2 right-0 h-[120px] w-[135px] font-['Liberation_Sans',sans-serif]">
      <path d="M85 195L290 300L300 298L100 190z" fill="#d9d9d9" />
      <path d="M90 188L200 240" stroke="#6a6af0" strokeWidth="6" />
      <path d="M200 240L306 294" stroke="#f58a8a" strokeWidth="6" />
      <path d="M172 67L275 98L210 248L110 198z" fill="#ececec" />
      <path d="M275 98L344 158L287 281L210 248z" fill="#e4e4e4" />
      <path d="M245 120L282 128L240 225L208 210z" fill="#d9dbde" />
      <path d="M172 67L275 98L344 158L287 281L210 248L110 198zM275 98L210 248" fill="none" stroke="#777" strokeWidth="3" strokeDasharray="10 4" />
      <text x="148" y="152" transform="rotate(20 148 152)" fontSize="27" fontWeight="bold" fill="#8d9297">
        FRONT
      </text>
      <text x="254" y="192" transform="rotate(34 254 192)" fontSize="21" fontWeight="bold" fill="#8d9297">
        RIGHT
      </text>
      <text x="60" y="196" fontSize="42" fontWeight="bold" fill="#8080f5">Z</text>
      <text x="250" y="95" fontSize="30" fontWeight="bold" fill="#7ef07e">Y</text>
      <text x="308" y="318" fontSize="42" fontWeight="bold" fill="#f58a8a">X</text>
    </svg>
  );
}

const navTools = [
  {
    name: 'Orbit',
    menu: true,
    icon: (
      <g fill="none" stroke="#666">
        <ellipse cx="10" cy="10" rx="4" ry="9" />
        <ellipse cx="10" cy="11" rx="9" ry="4.500" strokeDasharray="14 3" />
        <path d="M7 7h6v7H7z" fill="#f1f1f1" stroke="none" />
        <path d="M10 8v5M7.500 10.500h5" stroke="#1b86d8" strokeWidth="1.500" />
        <path d="M13 2l3 3-3 1zM17 7l2 3-3 0z" fill="#444" stroke="none" />
      </g>
    ),
  },
  {
    name: 'Look At',
    icon: (
      <g fill="#e4e4e4" stroke="#555">
        <path d="M1 7h18v12H1z" />
        <path d="M4 10h12v6H4z" fill="#8a8d92" />
        <path d="M2 5l3-3v2h5V1l5 3h3v1z" fill="#999" />
      </g>
    ),
  },
  {
    name: 'Pan',
    icon: (
      <path
        d="M6 19c-1-3-4-5-5-8 2-1 3 1 4.500 2L4 4c1.500-1 2 0 2.500 1L8 10V2c1-1.500 2-1.500 2.500 0v8L12 2c1-1 2-.5 2 .5L13.500 10 16 5c1-1 2 0 1.500 1.500C17 11 17 16 14 19z"
        fill="#fff"
        stroke="#555"
      />
    ),
  },
  {
    name: 'Zoom',
    icon: (
      <g fill="none" stroke="#777">
        <path d="M12 12l6 7" stroke="#222" strokeWidth="2.500" />
        <circle cx="8" cy="8" r="7" fill="#eaf2f2" />
        <path d="M15 3.500h5M17.500 1v5M15 8h5" stroke="#222" />
      </g>
    ),
  },
  {
    name: 'Fit',
    menu: true,
    icon: (
      <g fill="none" stroke="#777">
        <path d="M1 1h18v18H1z" strokeDasharray="3 2" stroke="#999" />
        <path d="M12 12l6 7" stroke="#222" strokeWidth="2.500" />
        <circle cx="8" cy="8" r="7" fill="#e4f0ee" />
      </g>
    ),
  },
  {
    name: 'Display Settings',
    menu: true,
    icon: (
      <g stroke="#666">
        <path d="M.5 1h19v14H.5z" fill="#d9d9d9" />
        <path d="M3 3h14v10H3z" fill="#8db4df" stroke="#4b6c96" />
        <path d="M8 15h4v2h3v2H5v-2h3z" fill="#bbb" />
      </g>
    ),
  },
  {
    name: 'Grid and Snaps',
    menu: true,
    icon: (
      <path d="M1 1h18v18H1zM4 1v18M7 1v18M10 1v18M13 1v18M16 1v18M1 4h18M1 7h18M1 10h18M1 13h18M1 16h18" fill="#fff" stroke="#666" strokeWidth="0.800" />
    ),
  },
  {
    name: 'Viewports',
    menu: true,
    icon: (
      <g fill="#8fb0d8" stroke="#32507e" strokeWidth="1.200">
        <path d="M1 2h18v16H1z" />
        <path d="M10 2v16" strokeWidth="2" />
        <path d="M1 10h18" />
      </g>
    ),
  },
];

function NavigationBar() {
  return (
    <div className="flex h-[30px] items-center gap-[10px] bg-[#f1f1f1] px-1">
      {navTools.map((tool) => (
        <button key={tool.name} title={tool.name} className="flex items-center gap-[3px]">
          <svg viewBox="0 0 20 20" className="size-5">
            {tool.icon}
          </svg>
          {tool.menu && <Caret />}
        </button>
      ))}
    </div>
  );
}

/* ---------- timeline ---------- */

// s = sketch, B = body feature, Y = selected joint, F = flag/plane feature
const timeline = 'sBYFFFsssBssBsBsBsBsBsBssssBsBsBssBssBsBsssssssssBsBsBss'.split('');

function TimelineFeature({ kind }: { kind: string }) {
  return (
    <button aria-label="Timeline feature" className={clsx('flex h-[30px] w-[30px] shrink-0 justify-center pt-[5px]', kind === 'Y' && 'bg-[#e6e61f]')}>
      <svg viewBox="0 0 20 20" className="size-5">
        {kind === 's' && (
          <>
            <path d="M1 18V8l6-6h6" fill="#e8e8e8" stroke="#777" strokeWidth="1.500" />
            <Star x={14} y={6} s={0.55} />
          </>
        )}
        {kind === 'B' && (
          <>
            <path d="M1 7l5-6h9l4 6v11H1z" fill="#d3d7dd" stroke="#555" />
            <path d="M9 10l6-8 4 5v11z" fill="#9aa2b0" />
            <path d="M9 10l6-8-9 0-5 6z" fill="#e4e7eb" />
          </>
        )}
        {kind === 'Y' && (
          <>
            <rect x="3" y="2" width="8" height="14" rx="3" fill="#f3f3e6" stroke="#b9b9a0" />
            <circle cx="14" cy="14" r="4" fill="none" stroke="#8f8f2a" strokeWidth="2" />
          </>
        )}
        {kind === 'F' && (
          <>
            <path d="M.7 20V.7h8V20" fill="#f8f8f8" stroke="#777" strokeWidth="1.200" />
            <path d="M9 0h11v11H9z" fill="#68aee2" />
          </>
        )}
      </svg>
    </button>
  );
}

function Timeline() {
  return (
    <footer className="relative flex h-[30px] shrink-0 overflow-hidden border-t border-[#d2d4d3] bg-[#f1f1f1] pt-[14px]">
      <div className="absolute top-0 left-[5px] h-2 w-12 rounded-b-[4px] bg-[#c9c9c9]" />
      <div className="flex w-[178px] shrink-0 pt-[11px] pl-[10px] text-[#666]">
        <svg viewBox="0 0 150 14" className="h-[14px] w-[150px]" fill="currentColor">
          <path d="M5 3v8L1 7zM46 3v8l-6-4zM67 1v12l10-6zM102 3v8l6-4zM126 3v8l6-4zM136 3h2v8h-2z" />
        </svg>
      </div>
      {timeline.map((kind, i) => (
        <TimelineFeature key={i} kind={kind} />
      ))}
      <button aria-label="Timeline settings" className="mt-[9px] mr-[14px] ml-auto">
        <svg viewBox="0 0 16 16" className="size-4" fill="#888">
          <path d="M6.500 0h3v16h-3zM0 6.500h16v3H0zM1.500 3.500l2-2 11 11-2 2zM12.500 1.500l2 2-11 11-2-2z" />
          <circle cx="8" cy="8" r="5.500" />
        </svg>
      </button>
    </footer>
  );
}

export default function App() {
  return (
    <div className="flex h-screen flex-col overflow-hidden bg-white font-['Liberation_Sans',Arial,sans-serif]">
      <TitleBar />
      <DocumentBar />
      <Ribbon />
      <main className="relative flex min-h-0 flex-1 flex-col justify-between">
        <Model />
        <ViewCube />
        <div className="relative">
          <BrowserPanel />
        </div>
        <div className="relative mb-[6px] grid grid-cols-[1fr_auto_1fr] items-start pl-[5px]">
          <div className="flex h-[31px] w-[374px] items-center border border-t-0 border-b-2 border-[#c9c9c9] bg-[#f1f1f1] pr-[13px] pl-[30px] text-[14px] text-[#666]">
            <h2>COMMENTS</h2>
            <button aria-label="Expand comments" className="ml-auto">
              <svg viewBox="0 0 12 12" className="size-3">
                <circle cx="6" cy="6" r="6" fill="#333" />
                <path d="M3 6h6M6 3v6" stroke="#ddd" strokeWidth="1.500" />
              </svg>
            </button>
          </div>
          <NavigationBar />
        </div>
      </main>
      <Timeline />
    </div>
  );
}
